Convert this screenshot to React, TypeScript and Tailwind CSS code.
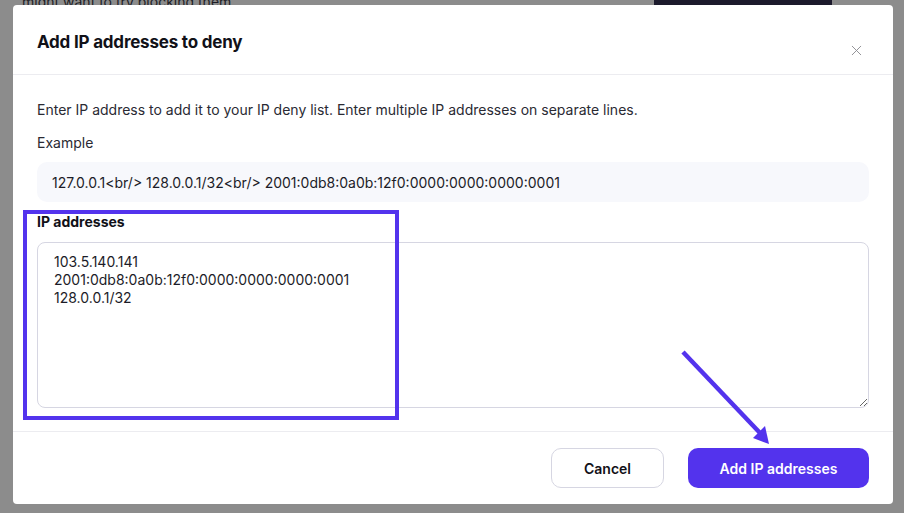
import { X } from 'lucide-react';

export default function App() {
  return (
    <div className="relative h-[513px] w-[904px] overflow-hidden bg-[#8c8c8c] font-['Inter',sans-serif] text-[#1c1c28]">
      {/* Page behind the overlay */}
      <div className="absolute inset-x-0 top-0 flex h-[5px] items-end">
        <p className="ml-[22px] -mb-[4px] text-[14px] leading-[14px] text-[#1e1e26]">might want to try blocking them.</p>
        <div className="ml-auto mr-[72px] h-[5px] w-[178px] bg-[#1c1a2c]" />
      </div>

      <div className="relative pl-[13px] pt-[5px]">
        <div className="relative flex h-[499px] w-[880px] flex-col rounded-[4px] bg-white">
          {/* Header */}
          <div className="flex h-[70px] items-start justify-between border-b border-[#ececf0] px-6 pt-[27px]">
            <h2 className="text-[17px] font-bold leading-[20px] tracking-[-0.2px] text-[#111118]">Add IP addresses to deny</h2>
            <button className="mr-[4px] mt-[10px] text-[#8a8a8f]" aria-label="Close">
              <X className="h-[17px] w-[17px]" strokeWidth={1.3} />
            </button>
          </div>

          {/* Body */}
          <div className="flex flex-1 flex-col border-b border-[#ececf0] px-6 pt-[25px]">
            <p className="text-[14px] leading-[20px] text-[#2a2a33]">
              Enter IP address to add it to your IP deny list. Enter multiple IP addresses on separate lines.
            </p>
            <p className="mt-[13px] text-[14px] leading-[20px] text-[#2a2a33]">Example</p>
            <div className="mt-[9px] flex h-[40px] items-center rounded-[10px] bg-[#f7f8fc] pl-[15px] text-[14px] text-[#1c1c28]">
              127.0.0.1&lt;br/&gt; 128.0.0.1/32&lt;br/&gt; 2001:0db8:0a0b:12f0:0000:0000:0000:0001
            </div>
            <label className="mt-[10px] text-[14px] font-bold leading-[20px] text-[#111118]">IP addresses</label>
            <textarea
              className="mt-[10px] h-[166px] w-full resize-y rounded-[8px] border border-[#d6d6e2] px-4 pt-[10px] text-[14px] leading-[18px] text-[#1c1c28] outline-none"
              defaultValue={'103.5.140.141\n2001:0db8:0a0b:12f0:0000:0000:0000:0001\n128.0.0.1/32'}
            />
          </div>

          {/* Footer */}
          <div className="flex h-[72px] items-start justify-end gap-6 px-6 pt-[16px]">
            <button className="h-[40px] w-[113px] rounded-[10px] border border-[#d6d6e2] bg-white text-[14px] font-semibold text-[#111118]">
              Cancel
            </button>
            <button className="h-[40px] w-[181px] rounded-[10px] bg-[#5333ed] text-[14px] font-semibold text-white">
              Add IP addresses
            </button>
          </div>

          {/* Annotation box */}
          <div className="absolute left-[10px] top-[205px] h-[210px] w-[376px] border-[4px] border-[#5333ed]" />

          {/* Annotation arrow */}
          <svg className="absolute left-[660px] top-[340px]" width="120" height="110" viewBox="0 0 120 110">
            <line x1="10" y1="7" x2="88" y2="89" stroke="#5333ed" strokeWidth="4.5" />
            <polygon points="96,99 80,93 92,81" fill="#5333ed" />
          </svg>
        </div>
      </div>
    </div>
  );
}
